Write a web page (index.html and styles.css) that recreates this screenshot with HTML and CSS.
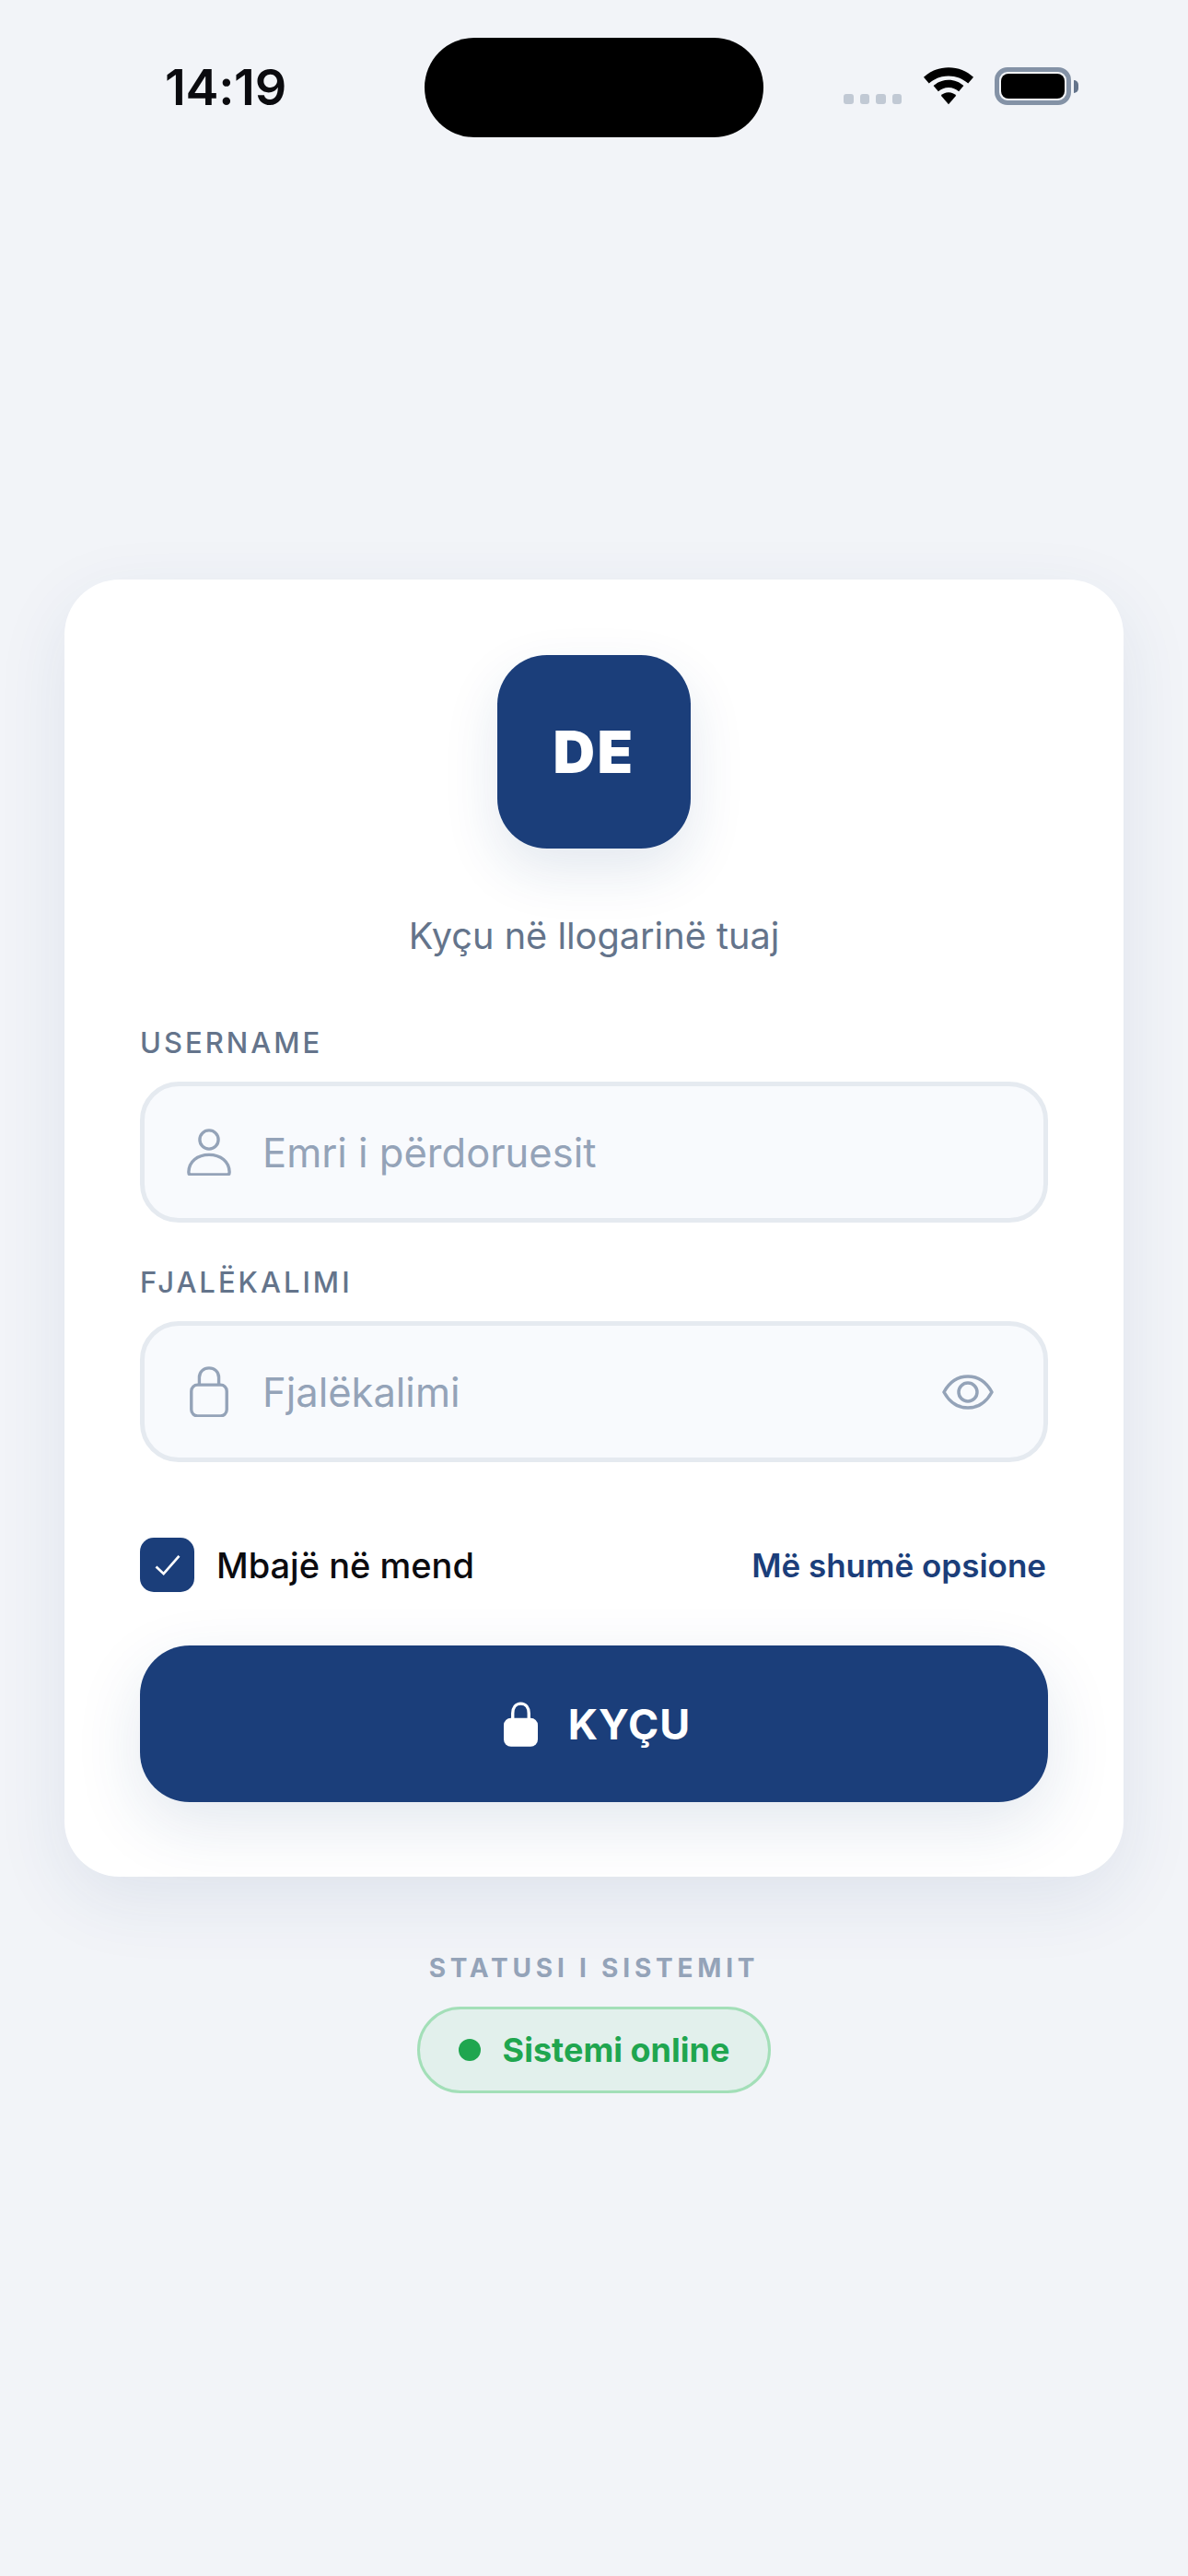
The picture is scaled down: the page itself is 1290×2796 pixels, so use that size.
FILE: index.html
```html
<!DOCTYPE html>
<html lang="sq">
<head>
<meta charset="utf-8">
<title>Kyçu</title>
<link rel="stylesheet" href="styles.css">
</head>
<body>
<div class="screen">
  <header class="status">
    <span class="time">14:19</span>
    <div class="island"></div>
    <div class="status-icons">
      <div class="signal"><i></i><i></i><i></i><i></i></div>
      <svg class="wifi" width="56" height="41" viewBox="0 0 58 42"><path d="M29 0C18 0 8.500 4 1 11l6 7C13 12.500 20.500 9.500 29 9.500S45 12.500 51 18l6-7C49.500 4 40 0 29 0Z"/><path d="M29 14c-6.500 0-12.500 2.500-17 6.500l5.500 6.500c3-2.800 7-4.500 11.500-4.500S37.500 24.200 40.500 27l5.500-6.500C41.500 16.500 35.500 14 29 14Z"/><path d="M29 28c-3.500 0-6.500 1.300-8.500 3.500L29 41.500l8.500-10C35.500 29.300 32.500 28 29 28Z"/></svg>
      <div class="battery"><div class="battery-level"></div></div>
      <div class="battery-cap"></div>
    </div>
  </header>

  <main class="center">
    <section class="card">
      <div class="logo">DE</div>
      <p class="subtitle">Kyçu në llogarinë tuaj</p>

      <label class="label">USERNAME</label>
      <div class="field">
        <svg class="field-icon" width="50" viewBox="0 0 52 54" fill="none" stroke="#94a3b8" stroke-width="3.500" stroke-linejoin="round"><circle cx="26" cy="12.500" r="10.500"/><path d="M3 49.500C3 37 13 29.500 26 29.500S49 37 49 49.500c0 1.500-1 2.500-2.500 2.500h-41C4 52 3 51 3 49.500Z"/></svg>
        <span class="placeholder">Emri i përdoruesit</span>
      </div>

      <label class="label label-second">FJALËKALIMI</label>
      <div class="field">
        <svg class="field-icon" width="50" viewBox="0 0 52 58" fill="none" stroke="#94a3b8" stroke-width="3.500"><rect x="6" y="21" width="40" height="35" rx="7"/><path d="M15 21V12.500C15 6 20 2 26 2s11 4 11 10.500V21"/></svg>
        <span class="placeholder">Fjalëkalimi</span>
        <svg class="eye" width="56" height="38" viewBox="0 0 56 38" fill="none" stroke="#94a3b8" stroke-width="3.500" stroke-linejoin="round"><path d="M2 19C8 8 17 2 28 2s20 6 26 17c-6 11-15 17-26 17S8 30 2 19Z"/><circle cx="28" cy="19" r="10"/></svg>
      </div>

      <div class="options">
        <div class="remember">
          <span class="checkbox"><svg width="30" height="25" viewBox="0 0 30 26" fill="none" stroke="#fff" stroke-width="2.800"><path d="M2 15l8.500 8L28 3"/></svg></span>
          <span class="remember-text">Mbajë në mend</span>
        </div>
        <a class="more">Më shumë opsione</a>
      </div>

      <button class="submit">
        <svg width="37" height="49" viewBox="0 0 38 50"><path d="M10 22V13C10 6.500 13.500 2 19 2s9 4.500 9 11v9" fill="none" stroke="#fff" stroke-width="3.500"/><rect x="0" y="18" width="38" height="32" rx="8" fill="#fff"/></svg>
        <span>KYÇU</span>
      </button>
    </section>

    <p class="status-title">STATUSI I SISTEMIT</p>
    <div class="pill"><i class="dot"></i><span>Sistemi online</span></div>
  </main>
</div>
</body>
</html>
```

FILE: styles.css
```css
* { box-sizing: border-box; }
html, body { margin: 0; padding: 0; }
body { background: #f2f4f8; font-family: Inter, "Liberation Sans", sans-serif; }
.screen { width: 1290px; height: 2796px; display: flex; flex-direction: column; overflow: hidden; }

.status { height: 150px; position: relative; flex: none; }
.time { position: absolute; left: 179px; top: 62px; font-size: 54px; line-height: 66px; font-weight: 600; letter-spacing: -0.300px; color: #0b0b0f; }
.island { position: absolute; left: 461px; top: 41px; width: 368px; height: 108px; border-radius: 54px; background: #000; }
.status-icons { position: absolute; left: 916px; top: 73px; display: flex; align-items: flex-start; }
.signal { display: flex; gap: 7px; margin-top: 29px; }
.signal i { width: 10.500px; height: 11px; border-radius: 3px; background: #c1c9d4; }
.wifi { margin-left: 23px; }
.battery { width: 83px; height: 41px; margin-left: 22px; border: 5px solid #8492a6; border-radius: 14px; padding: 2px; }
.battery-level { width: 100%; height: 100%; background: #000; border-radius: 8px; }
.battery-cap { width: 5px; height: 14px; margin: 14px 0 0 3px; background: #64748b; border-radius: 0 7px 7px 0; }

.center { padding: 479px 70px 0; display: flex; flex-direction: column; align-items: center; }
.card { width: 1150px; height: 1408px; padding: 82px; background: #fff; border-radius: 60px; box-shadow: 0 24px 80px rgba(28, 63, 123, 0.09); display: flex; flex-direction: column; }
.logo { width: 210px; height: 210px; align-self: center; background: #1b3e7a; border-radius: 54px; box-shadow: 0 24px 60px rgba(28, 63, 123, 0.12); color: #fff; font-size: 63px; font-weight: 900; letter-spacing: 2.500px; display: flex; align-items: center; justify-content: center; flex: none; }
.subtitle { margin: 71px 0 0; text-align: center; font-size: 39.700px; line-height: 48px; color: #64748b; }
.label { margin-top: 74px; font-size: 31px; line-height: 36px; font-weight: 500; letter-spacing: 3px; color: #64748b; }
.label-second { margin-top: 47px; }
.field { margin-top: 24px; height: 153px; background: #f8fafd; border: 5px solid #e5eaf0; border-radius: 42px; padding: 0 54px 0 45px; display: flex; align-items: center; flex: none; }
.field-icon { flex: none; }
.placeholder { margin-left: 33px; font-size: 43.500px; color: #94a3b8; flex: 1; }
.eye { flex: none; }

.options { margin-top: 82px; display: flex; align-items: center; justify-content: space-between; }
.remember { display: flex; align-items: center; gap: 24px; }
.checkbox { width: 59px; height: 59px; background: #1b3e7a; border-radius: 15px; display: flex; align-items: center; justify-content: center; }
.remember-text { font-size: 38px; font-weight: 500; color: #0b0b0f; }
.more { font-size: 35px; font-weight: 600; color: #1b3e7a; padding-right: 2px; }

.submit { margin-top: 58px; height: 170px; flex: none; border: 0; border-radius: 54px; padding: 0 0 0 7px; background: #1b3e7a; box-shadow: 0 24px 72px rgba(28, 63, 123, 0.12); color: #fff; display: flex; align-items: center; justify-content: center; gap: 33px; font-family: inherit; font-size: 45px; font-weight: 700; letter-spacing: 1px; }

.status-title { margin: 81px 0 0; font-size: 28px; line-height: 36px; font-weight: 700; letter-spacing: 4.800px; color: #94a3b8; }
.pill { margin-top: 24px; width: 384px; height: 94px; border: 3px solid #a3dfb8; background: #e2f0ec; border-radius: 47px; display: flex; align-items: center; justify-content: center; gap: 24px; color: #1fa64f; font-size: 36px; font-weight: 700; }
.dot { width: 24px; height: 24px; border-radius: 50%; background: #1fa64f; }
```
